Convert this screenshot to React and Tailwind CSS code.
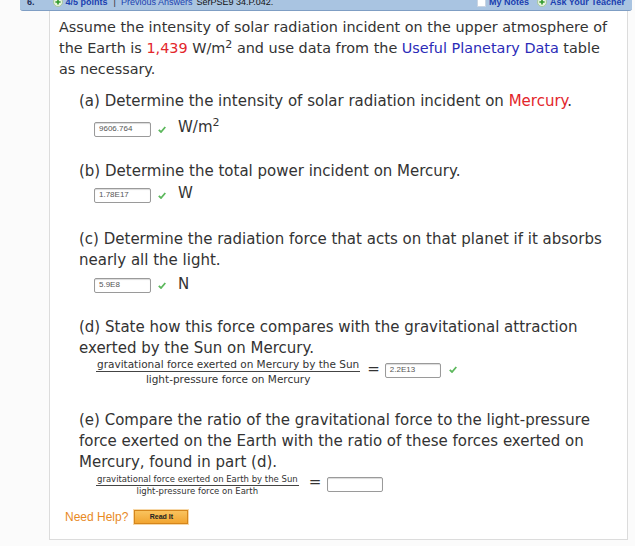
import React from "react";

function PlusIcon() {
  return (
    <svg width="10" height="10" viewBox="0 0 10 10" className="shrink-0">
      <circle cx="5" cy="5" r="4.5" fill="#e8f3e0" stroke="#9cc38a" strokeWidth="0.8" />
      <path d="M5 2.4v5.2M2.4 5h5.2" stroke="#2f9a2a" strokeWidth="1.6" />
    </svg>
  );
}

function Check() {
  return (
    <svg width="8" height="7" viewBox="0 0 8 7" className="shrink-0">
      <path d="M0.8 3.8L3 6L7.3 1" fill="none" stroke="#5cb85c" strokeWidth="1.8" />
    </svg>
  );
}

function Input({ value, w = "w-[57px]" }) {
  return (
    <div
      className={`${w} h-[15px] border border-[#9a9a9a] rounded-[2px] bg-white flex items-center pl-[4px] text-[8px] text-[#555] shadow-[inset_0_1px_1px_rgba(0,0,0,0.15)]`}
      style={{ fontFamily: '"Liberation Sans", Arial, sans-serif' }}
    >
      {value}
    </div>
  );
}

export default function App() {
  return (
    <div
      className="w-[635px] h-[546px] bg-[#fbfbfb] overflow-hidden text-[#333]"
      style={{ fontFamily: '"DejaVu Sans", Verdana, sans-serif' }}
    >
      {/* header */}
      <div className="ml-[20px] w-[612px] h-[11px] overflow-hidden bg-[#a9c4e1] border-b border-[#7f9ec4] rounded-b-[3px] flex items-start text-[9px] font-bold"
        style={{ fontFamily: '"Liberation Sans", Arial, sans-serif' }}>
        <div className="flex items-center mt-[-4px] w-full leading-[12px]">
          <span className="ml-[7px] text-[#1f2f5a]">6.</span>
          <span className="ml-[18px]"><PlusIcon /></span>
          <span className="ml-[3px] text-[#1b3fb0]">4/5 points</span>
          <span className="ml-[6px] font-normal text-[#333]">|</span>
          <span className="ml-[5px] font-normal text-[#1b3fb0]">Previous Answers</span>
          <span className="ml-[4px] font-normal text-[#111]">SerPSE9 34.P.042.</span>
          <span className="ml-auto w-[9px] h-[9px] bg-white border border-[#c9d4e2]"></span>
          <span className="ml-[3px] text-[#1b3fb0]">My Notes</span>
          <span className="ml-[8px]"><PlusIcon /></span>
          <span className="ml-[3px] mr-[7px] text-[#1b3fb0]">Ask Your Teacher</span>
        </div>
      </div>

      {/* content box */}
      <div className="ml-[49px] w-[579px] h-[529px] bg-white border-l border-r border-b border-[#dcdcdc] pl-[9px] pt-[6px]">
        <p className="text-[14.4px] leading-[21px] pr-[8px]">
          Assume the intensity of solar radiation incident on the upper atmosphere of the Earth is{" "}
          <span className="text-[#e3262b]">1,439</span> W/m<sup className="text-[11px]">2</sup> and use data from the{" "}
          <span className="text-[#2b2bb8]">Useful Planetary Data</span> table as necessary.
        </p>

        <div className="ml-[20px] pr-[10px]">
          {/* (a) */}
          <p className="mt-[11px] text-[15px] leading-[21px]">
            (a) Determine the intensity of solar radiation incident on <span className="text-[#e3262b]">Mercury</span>.
          </p>
          <div className="mt-[5px] ml-[15px] flex items-center h-[24px]">
            <Input value="9606.764" />
            <span className="ml-[7px]"><Check /></span>
            <span className="ml-[12px] text-[15px] mt-[-4px]">
              W/m<sup className="text-[11px]">2</sup>
            </span>
          </div>

          {/* (b) */}
          <p className="mt-[20px] text-[15px] leading-[21px]">
            (b) Determine the total power incident on Mercury.
          </p>
          <div className="ml-[15px] flex items-center h-[16px] mt-[5px]">
            <Input value="1.78E17" />
            <span className="ml-[7px]"><Check /></span>
            <span className="ml-[12px] text-[15px] mt-[-4px]">W</span>
          </div>

          {/* (c) */}
          <p className="mt-[26px] text-[15px] leading-[21px]">
            (c) Determine the radiation force that acts on that planet if it absorbs nearly all the light.
          </p>
          <div className="ml-[15px] flex items-center h-[16px] mt-[6px]">
            <Input value="5.9E8" />
            <span className="ml-[7px]"><Check /></span>
            <span className="ml-[12px] text-[15px] mt-[-2px]">N</span>
          </div>

          {/* (d) */}
          <p className="mt-[24px] text-[15px] leading-[21px]">
            (d) State how this force compares with the gravitational attraction exerted by the Sun on Mercury.
          </p>
          <div className="ml-[17px] flex items-center mt-[-1px]">
            <div className="flex flex-col items-center text-[10.5px] leading-[13px]">
              <span className="border-b border-[#444] px-[1px]">gravitational force exerted on Mercury by the Sun</span>
              <span className="mt-[1px]">light-pressure force on Mercury</span>
            </div>
            <span className="ml-[7px] text-[15px] mt-[-6px]">=</span>
            <span className="ml-[5px] mt-[-4px]"><Input value="2.2E13" w="w-[56px]" /></span>
            <span className="ml-[8px] mt-[-6px]"><Check /></span>
          </div>

          {/* (e) */}
          <p className="mt-[24px] text-[15px] leading-[21px]">
            (e) Compare the ratio of the gravitational force to the light-pressure force exerted on the Earth with the ratio of these forces exerted on Mercury, found in part (d).
          </p>
          <div className="ml-[17px] flex items-center mt-[1px]">
            <div className="flex flex-col items-center text-[8.5px] leading-[11px]">
              <span className="border-b border-[#444] px-[1px]">gravitational force exerted on Earth by the Sun</span>
              <span className="mt-[0px]">light-pressure force on Earth</span>
            </div>
            <span className="ml-[10px] text-[15px] mt-[-6px]">=</span>
            <span className="ml-[6px] mt-[-2px]"><Input value="" w="w-[56px]" /></span>
          </div>
        </div>

        {/* need help */}
        <div className="mt-[11px] ml-[6px] flex items-center" style={{ fontFamily: '"Liberation Sans", Arial, sans-serif' }}>
          <span className="text-[12px] text-[#e8891f]">Need Help?</span>
          <div className="ml-[6px] w-[54px] h-[14px] bg-[linear-gradient(#f9c35e,#f2a531)] border border-[#d5861c] shadow-[0_0_0_1px_#f7d8a8] flex items-center justify-center text-[7px] font-bold text-[#222]">
            Read It
          </div>
        </div>
      </div>
    </div>
  );
}
